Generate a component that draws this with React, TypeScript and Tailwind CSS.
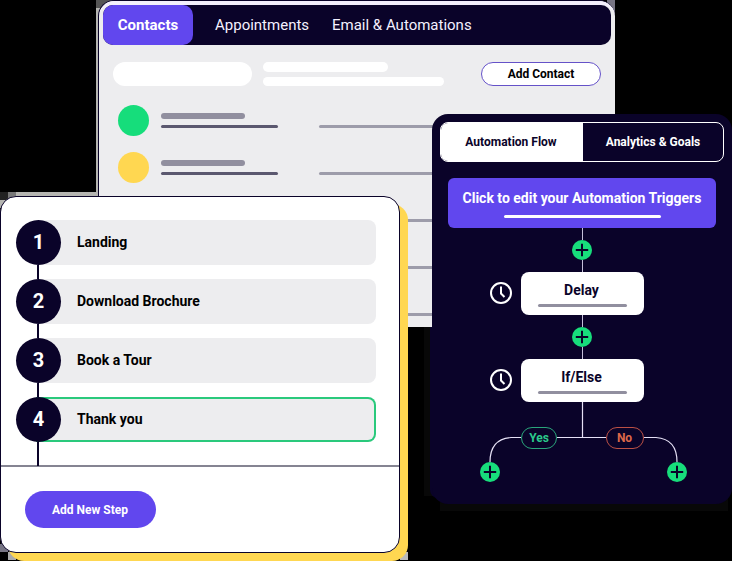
import React from "react";

const steps = ["Landing", "Download Brochure", "Book a Tour", "Thank you"];

function Plus() {
  return (
    <svg viewBox="0 0 20 20" className="block h-5 w-5 shrink-0">
      <circle cx="10" cy="10" r="10" fill="#17dd7b" />
      <path d="M10 3.8v12.4M3.8 10h12.4" stroke="#0a0329" strokeWidth="2" />
    </svg>
  );
}

function Clock() {
  return (
    <svg viewBox="0 0 22 22" fill="none" stroke="#fff" strokeWidth="2" className="block h-[22px] w-[22px]">
      <circle cx="11" cy="11" r="10" />
      <path d="M11 4.5V11.5L14.5 15" />
    </svg>
  );
}

function ContactRow({ dot, name }: { dot: string; name?: boolean }) {
  return (
    <div className="flex h-[31px] items-start">
      <div className={`h-[31px] w-[31px] shrink-0 rounded-full ${dot}`} />
      <div className="ml-3 w-[117px] shrink-0 pt-2">
        {name && (
          <>
            <div className="h-1.5 w-[84px] rounded-full bg-[#918f9f]" />
            <div className="mt-1.5 h-[3px] rounded-full bg-[#5b586f]" />
          </>
        )}
      </div>
      <div className="mt-5 ml-[41px] h-[3px] w-[180px] rounded-full bg-[#9d9caa]" />
    </div>
  );
}

function ContactsWindow() {
  return (
    <section className="absolute top-0 left-[98px] h-[327px] w-[517px] overflow-hidden rounded-t-2xl border-t border-l border-[#0a0329] bg-[#ededef]">
      <div className="h-full rounded-t-[15px] border-t-4 border-[#f3effc] pl-1">
        <nav className="flex h-10 w-[508px] items-center rounded-[10px] bg-[#0a0329] text-[15px] leading-5 text-[#f4f1ff]">
          <div className="flex h-10 w-[90px] items-center justify-center rounded-[10px] bg-[#6147ee] text-[15px] font-bold text-white">Contacts</div>
          <span className="ml-[22px] w-[117px]">Appointments</span>
          <span>Email &amp; Automations</span>
        </nav>
        <div className="mt-[17px] flex h-6 items-center pl-2.5">
          <div className="h-6 w-[139px] rounded-full bg-white" />
          <div className="ml-[11px] flex w-[218px] flex-col gap-[5px]">
            <div className="h-2.5 w-[125px] rounded-full bg-white" />
            <div className="h-[9px] w-[181px] rounded-full bg-white" />
          </div>
          <button className="h-6 w-[120px] rounded-full border border-[#6552c8] bg-white text-xs font-bold text-black">Add Contact</button>
        </div>
        <div className="mt-[19px] flex flex-col gap-4 pl-[15px]">
          <ContactRow dot="bg-[#16dd7b]" name />
          <ContactRow dot="bg-[#ffd751]" name />
          <ContactRow dot="bg-transparent" />
          <ContactRow dot="bg-transparent" />
          <ContactRow dot="bg-transparent" />
        </div>
      </div>
    </section>
  );
}

function StepsWindow() {
  return (
    <section className="absolute top-[196px] left-0 flex h-[357px] w-[400px] flex-col rounded-2xl border border-[#0a0329] bg-white">
      <ol className="relative flex h-[268px] flex-col gap-3.5 pt-[23px] pl-[15px]">
        <div className="absolute top-10 left-9 h-[229px] w-0.5 bg-[#0a0329]" />
        {steps.map((label, i) => (
          <li key={label} className="relative flex h-[45px] w-[360px]">
            <div className="z-10 flex h-[45px] w-[45px] shrink-0 items-center justify-center rounded-full bg-[#0a0329] pb-px text-xl font-bold text-white">{i + 1}</div>
            <div className={`-ml-[25px] flex flex-1 items-center rounded-r-lg bg-[#ededef] pb-0.5 pl-[41px] text-sm font-bold text-black ${i === 3 ? "border-2 border-l-0 border-[#2ac97c]" : ""}`}>{label}</div>
          </li>
        ))}
      </ol>
      <div className="h-0.5 bg-[#858492]" />
      <div className="px-6 pt-6">
        <button className="h-[37px] w-[131px] rounded-full bg-[#6147ee] pr-px text-xs font-bold text-white">Add New Step</button>
      </div>
    </section>
  );
}

function FlowNode({ label }: { label: string }) {
  return (
    <div className="flex h-[43px] w-[212px] items-center">
      <div className="mr-[9px] pb-0.5"><Clock /></div>
      <div className="flex h-[43px] w-[123px] flex-col items-center rounded-lg bg-white text-sm font-bold text-[#0a0329]">
        <div className="mt-2 pr-0.5 leading-5">{label}</div>
        <div className="mt-1 h-[3px] w-[89px] rounded-full bg-[#918f9f]" />
      </div>
    </div>
  );
}

function Joint() {
  return (
    <div className="flex h-11 w-[184px] flex-col items-center">
      <div className="h-3 w-px bg-[#c5c0da]" />
      <Plus />
      <div className="h-3 w-px bg-[#c5c0da]" />
    </div>
  );
}

function AutomationWindow() {
  return (
    <section className="absolute top-[114px] left-[432px] h-[390px] w-[300px] rounded-2xl bg-[#0a0329] pt-2 pl-2">
      <div className="flex h-10 w-[284px] overflow-hidden rounded-lg border border-white text-xs font-bold">
        <div className="flex w-[142px] items-center justify-center bg-white pr-0.5 text-[#0a0329]">Automation Flow</div>
        <div className="flex flex-1 items-center justify-center text-white">Analytics &amp; Goals</div>
      </div>
      <div className="mt-4 ml-2 flex h-[50px] w-[268px] flex-col items-center rounded-md bg-[#6147ee] text-white">
        <div className="mt-2.5 text-sm leading-5 font-bold whitespace-nowrap">Click to edit your Automation Triggers</div>
        <div className="mt-[7px] h-[3px] w-[157px] rounded-full bg-white" />
      </div>
      <div className="ml-[50px] flex flex-col">
        <Joint />
        <FlowNode label="Delay" />
        <Joint />
        <FlowNode label="If/Else" />
      </div>
      <div className="relative ml-10 h-20 w-[207px]">
        <svg viewBox="0 0 207 80" className="block h-20 w-[207px]" fill="none" stroke="#e5e0f5" strokeWidth="1.2">
          <path d="M102.5 0V35.5M41 35.5H31Q10 37 10 60M77 35.5H126M164 35.5H176Q197 37 197 60" />
        </svg>
        <span className="absolute top-[25px] left-[41px] flex h-[22px] w-9 items-center justify-center rounded-full border border-[#2aa57b] text-xs font-bold text-[#2ac98b]">Yes</span>
        <span className="absolute top-[25px] left-[126px] flex h-[22px] w-[38px] items-center justify-center rounded-full border border-[#bb5045] pr-px text-xs font-bold text-[#dd6849]">No</span>
        <div className="absolute top-[60px] left-0"><Plus /></div>
        <div className="absolute top-[60px] right-0"><Plus /></div>
      </div>
    </section>
  );
}

export default function App() {
  return (
    <main className="relative h-[561px] w-[732px] overflow-hidden bg-black font-['Roboto',sans-serif]">
      <div className="absolute top-0 left-24 h-[196px] w-4 bg-[#b5b5b1]" />
      <div className="absolute top-0 left-24 h-2 w-4 bg-[#555]" />
      <div className="absolute top-0 right-[117px] h-4 w-2 bg-[#777584]" />
      <div className="absolute top-48 left-0 h-2 w-2 bg-[#222]" />
      <div className="absolute top-[200px] left-0 h-2 w-2 bg-[#b5b5b1]" />
      <div className="absolute top-48 left-2 h-2 w-2 bg-[#777]" />
      <div className="absolute top-48 left-4 h-1 w-[82px] bg-[#b5b5b1]" />
      <ContactsWindow />
      <div className="absolute top-[327px] left-[424px] h-[169px] w-3 bg-[#080808]" />
      <div className="absolute top-[498px] left-[440px] h-[13px] w-[288px] bg-[#080808]" />
      <div className="absolute top-[327px] left-[430px] h-[171px] w-4 rounded-bl-lg bg-[#0a0329]" />
      <AutomationWindow />
      <div className="absolute top-[544px] left-0 h-2 w-2 bg-[#777584]" />
      <div className="absolute top-[552px] left-2 h-2 w-2 bg-[#aaa]" />
      <div className="absolute top-[552px] left-[400px] h-2 w-2 bg-[#bbb]" />
      <div className="absolute top-[204px] left-2 h-[357px] w-[400px] rounded-2xl bg-[#ffd751]" />
      <StepsWindow />
    </main>
  );
}
